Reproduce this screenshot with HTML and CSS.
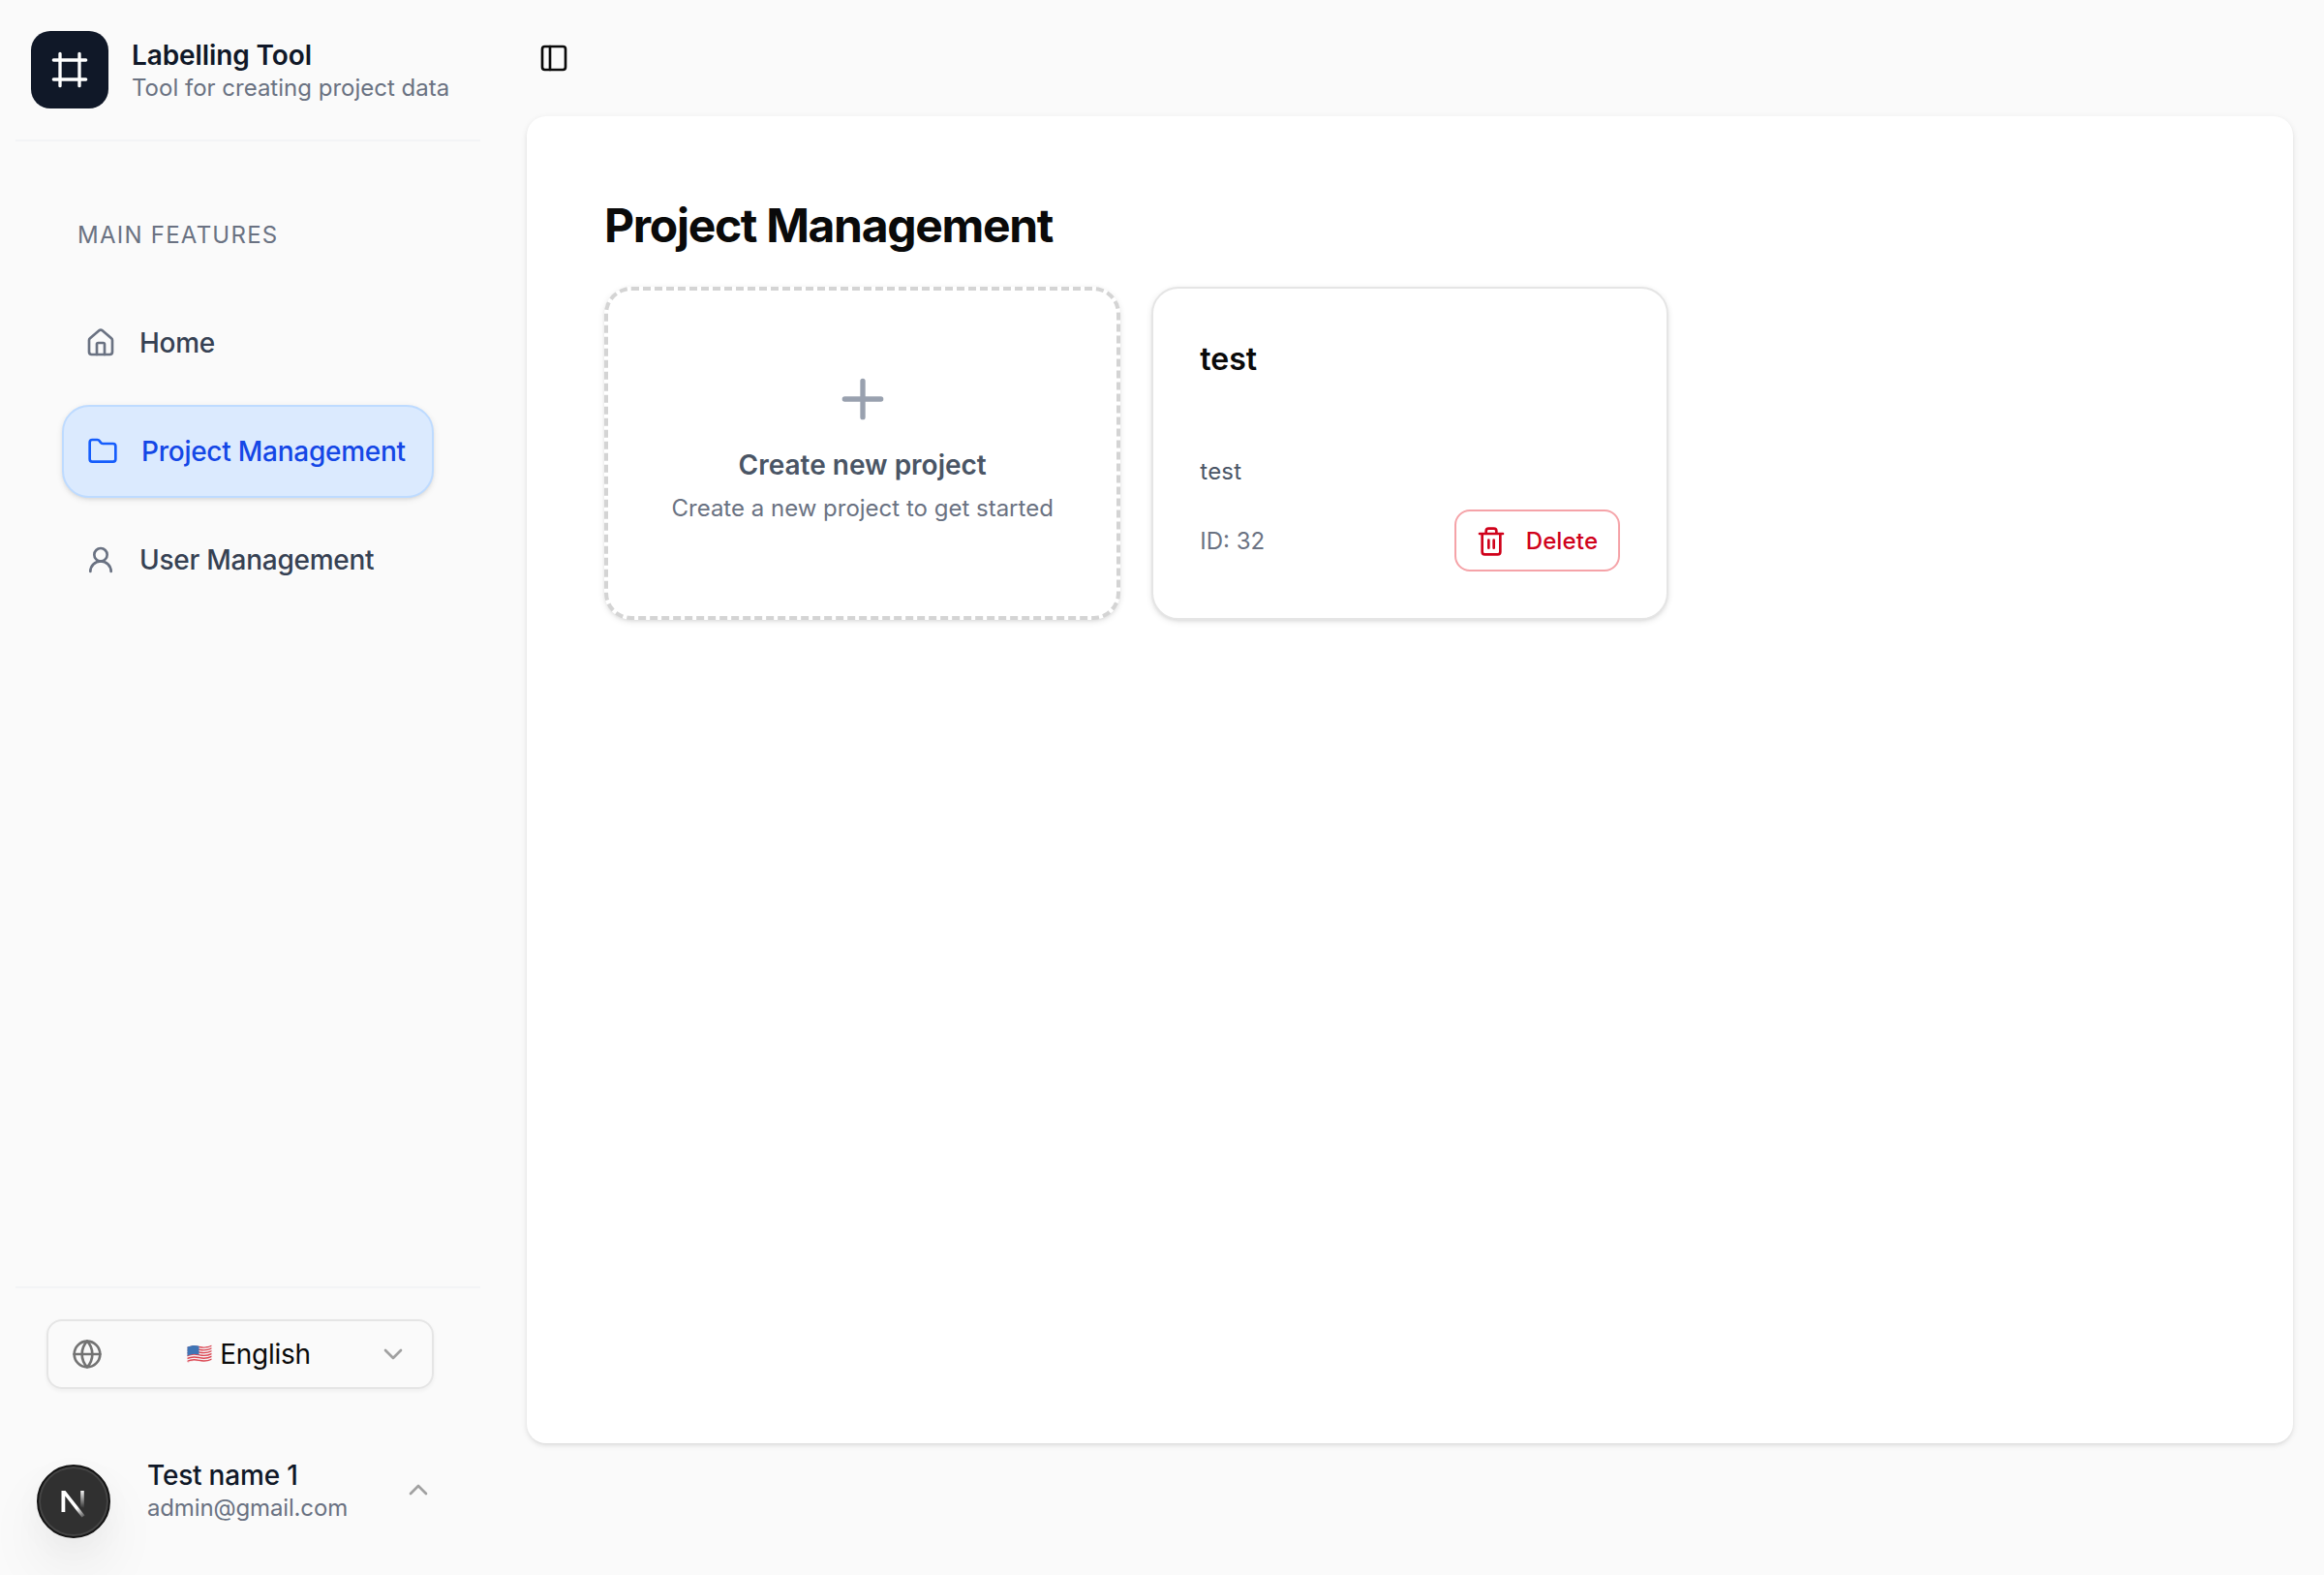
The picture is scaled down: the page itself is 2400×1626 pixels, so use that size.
FILE: index.html
```html
<!DOCTYPE html>
<html lang="en">
<head>
<meta charset="utf-8">
<title>Labelling Tool</title>
<link rel="stylesheet" href="styles.css">
</head>
<body>
<div class="app">
  <aside class="sidebar">
    <header class="brand">
      <div class="brand-logo">
        <svg class="icon icon-lg" viewBox="0 0 24 24"><path d="M22 6H2M22 18H2M6 2v20M18 2v20"/></svg>
      </div>
      <div class="brand-text">
        <div class="brand-title">Labelling Tool</div>
        <div class="brand-sub">Tool for creating project data</div>
      </div>
    </header>
    <nav class="nav">
      <div class="nav-label">MAIN FEATURES</div>
      <a class="nav-item">
        <svg class="icon" viewBox="0 0 24 24"><path d="M15 21v-8a1 1 0 0 0-1-1h-4a1 1 0 0 0-1 1v8"/><path d="M3 10a2 2 0 0 1 .709-1.528l7-5.999a2 2 0 0 1 2.582 0l7 5.999A2 2 0 0 1 21 10v9a2 2 0 0 1-2 2H5a2 2 0 0 1-2-2z"/></svg>
        <span>Home</span>
      </a>
      <a class="nav-item active">
        <svg class="icon" viewBox="0 0 24 24"><path d="M20 20a2 2 0 0 0 2-2V8a2 2 0 0 0-2-2h-7.9a2 2 0 0 1-1.69-.9L9.6 3.9A2 2 0 0 0 7.93 3H4a2 2 0 0 0-2 2v13a2 2 0 0 0 2 2Z"/></svg>
        <span>Project Management</span>
      </a>
      <a class="nav-item">
        <svg class="icon" viewBox="0 0 24 24"><circle cx="12" cy="8" r="5"/><path d="M20 21a8 8 0 0 0-16 0"/></svg>
        <span>User Management</span>
      </a>
    </nav>
    <footer class="side-footer">
      <button class="lang">
        <svg class="icon globe" viewBox="0 0 24 24"><circle cx="12" cy="12" r="10"/><path d="M12 2a14.5 14.5 0 0 0 0 20 14.5 14.5 0 0 0 0-20M2 12h20"/></svg>
        <span class="lang-value">
          <svg class="flag" viewBox="0 0 26 20">
            <clipPath id="wave"><path d="M.5 2.600C6 .2 9 .8 13 1.800S21 2.600 25.500 .6V16.400C21 18.400 17 18.400 13 17.600S5 16.800 .5 19Z"/></clipPath>
            <g clip-path="url(#wave)">
              <rect width="26" height="20" fill="#f4eef0"/>
              <path d="M0 3.400C6 .6 9 1.600 13 2.500S21 3.400 26 1M0 6.200C6 3.400 9 4.400 13 5.300S21 6.200 26 3.800M0 9C6 6.200 9 7.200 13 8.100S21 9 26 6.600M0 11.800C6 9 9 10 13 10.900S21 11.800 26 9.400M0 14.600C6 11.800 9 12.800 13 13.700S21 14.600 26 12.200M0 17.400C6 14.600 9 15.600 13 16.500S21 17.400 26 15M0 19.800C6 17 9 18 13 18.900" fill="none" stroke="#dd4a55" stroke-width="1.350"/>
              <path d="M0 0H12.500V10.600C9 9.800 5 9.700 0 12Z" fill="#3f74b5"/>
            </g>
          </svg>
          <span>English</span>
        </span>
        <svg class="icon chevron" viewBox="0 0 24 24"><path d="m6 9 6 6 6-6"/></svg>
      </button>
      <div class="user">
        <div class="avatar">
          <svg class="avatar-mark" viewBox="0 0 76 76">
            <defs>
              <linearGradient id="diag" x1="40" y1="46" x2="49" y2="57" gradientUnits="userSpaceOnUse"><stop stop-color="#fff"/><stop offset="1" stop-color="#fff" stop-opacity="0"/></linearGradient>
              <linearGradient id="stem" x1="47" y1="26" x2="47" y2="45" gradientUnits="userSpaceOnUse"><stop stop-color="#fff"/><stop offset="1" stop-color="#fff" stop-opacity="0"/></linearGradient>
            </defs>
            <path d="M25.500 49V27H29.500L49.500 52.500L46.500 54.500L29.300 32.500V49Z" fill="url(#diag)"/>
            <path d="M45.200 27H48.800V47L45.200 43Z" fill="url(#stem)"/>
          </svg>
        </div>
        <div class="user-text">
          <div class="user-name">Test name 1</div>
          <div class="user-mail">admin@gmail.com</div>
        </div>
        <svg class="icon chevron" viewBox="0 0 24 24"><path d="m18 15-6-6-6 6"/></svg>
      </div>
    </footer>
  </aside>
  <div class="content">
    <div class="topbar">
      <svg class="icon" viewBox="0 0 24 24"><rect x="3" y="3" width="18" height="18" rx="2"/><path d="M9 3v18"/></svg>
    </div>
    <main class="panel">
      <h1 class="heading">Project Management</h1>
      <div class="grid">
        <section class="card card-new">
          <svg class="icon plus" viewBox="0 0 24 24"><path d="M5 12h14M12 5v14"/></svg>
          <div class="new-title">Create new project</div>
          <div class="new-sub">Create a new project to get started</div>
        </section>
        <section class="card card-project">
          <h2 class="project-name">test</h2>
          <p class="project-desc">test</p>
          <div class="project-foot">
            <span class="project-id">ID: 32</span>
            <button class="delete">
              <svg class="icon" viewBox="0 0 24 24"><path d="M3 6h18M19 6v14a2 2 0 0 1-2 2H7a2 2 0 0 1-2-2V6M8 6V4a2 2 0 0 1 2-2h4a2 2 0 0 1 2 2v2M10 11v6M14 11v6"/></svg>
              <span>Delete</span>
            </button>
          </div>
        </section>
      </div>
    </main>
  </div>
</div>
</body>
</html>
```
FILE: styles.css
```css
* { box-sizing: border-box; margin: 0; padding: 0; }
body {
  background: #fafafa;
  color: #0a0a0a;
  font-family: Inter, "Liberation Sans", sans-serif;
  font-size: 28px;
  line-height: 40px;
  white-space: nowrap;
  overflow: hidden;
}
button { font: inherit; color: inherit; background: none; border: 0; }
.app { display: flex; height: 1626px; }
.icon {
  display: block; flex: none; width: 32px; height: 32px;
  fill: none; stroke: currentColor; stroke-width: 2;
  stroke-linecap: round; stroke-linejoin: round;
}
.icon-lg { width: 40px; height: 40px; }

.sidebar { width: 512px; padding: 0 16px; display: flex; flex-direction: column; }
.brand {
  height: 146px; padding: 32px 16px 0; display: flex; gap: 24px;
  border-bottom: 2px solid #f3f4f6;
}
.brand-logo {
  width: 80px; height: 80px; border-radius: 20px; background: #101828; color: #fff;
  display: flex; align-items: center; justify-content: center;
}
.brand-text { padding-top: 8px; }
.brand-title { font-weight: 600; line-height: 35px; letter-spacing: -.1px; color: #101828; }
.brand-sub { font-size: 24px; line-height: 32px; color: #6a7282; }

.nav { flex: 1; padding: 81px 48px 0; display: flex; flex-direction: column; gap: 16px; }
.nav-label {
  padding-left: 16px; height: 63px; font-size: 24px; line-height: 32px;
  letter-spacing: 1.25px; color: #6a7282;
}
.nav-item {
  width: 384px; height: 96px; padding: 0 24px; border-radius: 28px;
  display: flex; align-items: center; gap: 24px; font-weight: 500; color: #364153;
  letter-spacing: -.26px;
}
.nav-item .icon { color: #6a7282; }
.nav-item.active {
  background: #dbeafe; border: 2px solid #bedbff; color: #1447e6;
  box-shadow: 0 2px 6px rgba(0, 0, 0, .1), 0 2px 4px -2px rgba(0, 0, 0, .1);
}
.nav-item.active .icon { color: #155dfc; }

.side-footer { height: 298px; padding: 32px 32px 0; border-top: 2px solid #f3f4f6; }
.lang {
  width: 400px; height: 72px; padding: 0 24px; border: 2px solid #e5e5e5; border-radius: 16px;
  display: flex; align-items: center;
  box-shadow: 0 2px 4px rgba(0, 0, 0, .05);
}
.globe { color: #737373; }
.lang-value { flex: 1; padding-left: 18px; display: flex; align-items: center; justify-content: center; gap: 8px; letter-spacing: -.3px; }
.flag { width: 26px; height: 20px; }
.chevron { color: #a1a1a1; }
.user { margin-top: 74px; padding: 0 16px 0 6px; margin-left: -16px; display: flex; }
.avatar {
  width: 76px; height: 76px; margin-top: 4px; border-radius: 50%;
  background: #303030; border: 2px solid #141414;
  box-shadow: inset 0 0 0 2px #454545, 0 32px 64px -8px rgba(0, 0, 0, .1), 0 8px 32px rgba(0, 0, 0, .03);
}
.avatar-mark { display: block; width: 76px; height: 76px; margin: -2px; }
.user-text { flex: 1; margin: -2px 0 0 38px; }
.user-name { font-weight: 500; line-height: 35px; letter-spacing: -.2px; color: #101828; }
.user-mail { font-size: 24px; line-height: 32px; letter-spacing: -.15px; color: #6a7282; }
.user .chevron { margin-top: 14px; }

.content { flex: 1; padding: 0 32px; }
.topbar { height: 120px; padding: 44px 12px 0; }
.panel {
  height: 1370px; padding: 81px 80px 80px; background: #fff; border-radius: 20px;
  box-shadow: 0 2px 6px rgba(0, 0, 0, .1), 0 2px 4px -2px rgba(0, 0, 0, .1);
}
.heading { font-size: 48px; line-height: 64px; font-weight: 700; letter-spacing: -1.32px; }
.grid { margin-top: 31px; display: grid; grid-template-columns: repeat(3, 1fr); gap: 32px; }
.card {
  height: 344px; border-radius: 28px; background: #fff; display: flex; flex-direction: column;
  box-shadow: 0 2px 6px rgba(0, 0, 0, .1), 0 2px 4px -2px rgba(0, 0, 0, .1);
}
.card-new { border: 4px dashed #d4d4d4; align-items: center; padding-top: 80px; }
.plus { width: 64px; height: 64px; color: #99a1af; }
.new-title { margin-top: 16px; font-weight: 600; color: #4a5565; }
.new-sub { margin-top: 9px; font-size: 24px; line-height: 32px; color: #6a7282; }
.card-project { border: 2px solid #e5e5e5; padding: 49px 48px 48px; }
.project-name { font-size: 32px; line-height: 48px; font-weight: 600; }
.project-desc { margin-top: 76px; font-size: 24px; line-height: 32px; letter-spacing: .2px; color: #4a5565; }
.project-foot { margin-top: 23px; display: flex; align-items: center; justify-content: space-between; }
.project-id { padding-top: 2px; font-size: 24px; color: #6a7282; }
.delete {
  width: 171px; height: 64px; padding: 1px 20px 0; border: 2px solid #f5a3a8; border-radius: 16px;
  display: flex; align-items: center; gap: 20px; font-size: 24px; font-weight: 500;
  letter-spacing: .15px; color: #d0021b;
}
```
